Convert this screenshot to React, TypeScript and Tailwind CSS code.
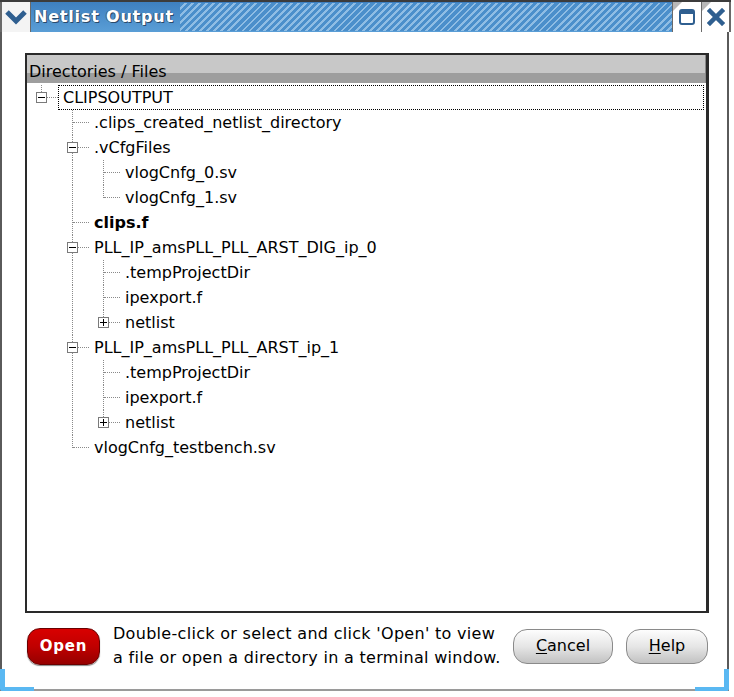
import React, { FC } from 'react'

type Row = {
  label: string
  level: number
  anc: boolean[]
  last: boolean
  expander?: 'minus' | 'plus'
  bold?: boolean
  selected?: boolean
}

const rows: Row[] = [
  { label: 'CLIPSOUTPUT', level: 0, anc: [], last: true, expander: 'minus', selected: true },
  { label: '.clips_created_netlist_directory', level: 1, anc: [false], last: false },
  { label: '.vCfgFiles', level: 1, anc: [false], last: false, expander: 'minus' },
  { label: 'vlogCnfg_0.sv', level: 2, anc: [false, true], last: false },
  { label: 'vlogCnfg_1.sv', level: 2, anc: [false, true], last: true },
  { label: 'clips.f', level: 1, anc: [false], last: false, bold: true },
  { label: 'PLL_IP_amsPLL_PLL_ARST_DIG_ip_0', level: 1, anc: [false], last: false, expander: 'minus' },
  { label: '.tempProjectDir', level: 2, anc: [false, true], last: false },
  { label: 'ipexport.f', level: 2, anc: [false, true], last: false },
  { label: 'netlist', level: 2, anc: [false, true], last: true, expander: 'plus' },
  { label: 'PLL_IP_amsPLL_PLL_ARST_ip_1', level: 1, anc: [false], last: false, expander: 'minus' },
  { label: '.tempProjectDir', level: 2, anc: [false, true], last: false },
  { label: 'ipexport.f', level: 2, anc: [false, true], last: false },
  { label: 'netlist', level: 2, anc: [false, true], last: true, expander: 'plus' },
  { label: 'vlogCnfg_testbench.sv', level: 1, anc: [false], last: true },
]

const Expander: FC<{ kind: 'minus' | 'plus' }> = ({ kind }) => (
  <div className="absolute left-[9px] top-[7px] w-[11px] h-[11px] border border-[#7a7a7a] bg-white flex items-center justify-center">
    <div className="absolute w-[7px] h-[1px] bg-black" />
    {kind === 'plus' && <div className="absolute w-[1px] h-[7px] bg-black" />}
  </div>
)

const TreeRow: FC<{ row: Row }> = ({ row }) => (
  <div className="flex h-[25px] items-stretch">
    {row.anc.map((on, i) => (
      <div key={i} className="relative w-[31px] shrink-0">
        {on && <div className="absolute left-[14px] top-0 bottom-0 border-l border-dotted border-[#8a8a8a]" />}
      </div>
    ))}
    <div className="relative w-[31px] shrink-0">
      <div className={`absolute left-[14px] top-0 border-l border-dotted border-[#8a8a8a] ${row.last ? 'h-[13px]' : 'bottom-0'}`} />
      <div className="absolute left-[15px] right-0 top-[12px] border-t border-dotted border-[#8a8a8a]" />
      {row.expander && <Expander kind={row.expander} />}
    </div>
    <div
      className={`flex items-center text-[16px] text-black ${row.bold ? 'font-bold' : ''} ${
        row.selected ? 'flex-1 border border-dotted border-black mr-[2px] pl-[4px]' : 'pl-[5px]'
      }`}
    >
      {row.label}
    </div>
  </div>
)

const App: FC = () => {
  return (
    <div className="w-[734px] h-[697px] bg-white overflow-hidden flex flex-col font-['DejaVu_Sans',sans-serif]">
      {/* title bar */}
      <div className="flex h-[32px] mr-[3px] border-t-2 border-[#3c3c3c] shrink-0">
        <div className="w-[31px] bg-[#f4f4f4] border-l-2 border-r border-[#6a6a6a] flex items-center justify-center">
          <svg width="22" height="16" viewBox="0 0 22 16">
            <path d="M2 3 L11 12 L20 3" fill="none" stroke="#2f5f90" strokeWidth="5" strokeLinejoin="miter" />
          </svg>
        </div>
        <div className="flex-1 flex bg-gradient-to-b from-[#3e80c0] to-[#5a9ed6]">
          <div className="flex items-center pl-[3px] pr-[6px]">
            <span className="text-white font-bold text-[16px] tracking-[0.8px] [text-shadow:1px_1px_0_#2a4a6a,-1px_0_0_#3a5f86]">
              Netlist Output
            </span>
          </div>
          <div className="flex-1 my-[1px] bg-[repeating-linear-gradient(135deg,#4b8fcb_0px,#4b8fcb_3px,#8fbde4_3px,#8fbde4_5px)]" />
        </div>
        <div className="relative w-[29px] bg-white border-l border-[#6a6a6a] flex items-center justify-center">
          <div className="absolute left-0 top-0 w-0 h-0 border-t-[9px] border-r-[9px] border-t-[#b8b8b8] border-r-transparent" />
          <div className="w-[16px] h-[16px] rounded-[3px] border-2 border-t-[5px] border-[#2f5f90]" />
        </div>
        <div className="relative w-[30px] bg-white border-l border-r-2 border-[#6a6a6a] flex items-center justify-center">
          <div className="absolute left-0 top-0 w-0 h-0 border-t-[9px] border-r-[9px] border-t-[#b8b8b8] border-r-transparent" />
          <svg width="18" height="18" viewBox="0 0 18 18">
            <path d="M3 3 L15 15 M15 3 L3 15" stroke="#2f5f90" strokeWidth="4.5" strokeLinecap="square" />
          </svg>
        </div>
      </div>

      {/* body */}
      <div className="relative flex-1 flex flex-col border-l-2 border-r-2 border-[#5a5a5a] mr-[5px] mb-[6px] border-b-2 border-b-[#9a9a9a]">
        <div className="ml-[23px] mt-[21px] w-[684px] h-[560px] border-2 border-[#2a2a2a] border-r-[3px] flex flex-col">
          <div className="h-[28px] flex flex-col border-r border-[#8a8a8a] shrink-0">
            <div className="h-[18px] bg-[#c8c8c8]" />
            <div className="h-[10px] bg-[#9e9e9e]" />
            <div className="-mt-[28px] h-[28px] flex items-end pl-[2px] pb-[1px] text-[16px] text-black leading-[20px]">
              Directories / Files
            </div>
          </div>
          <div className="pt-[2px]">
            {rows.map((r, i) => (
              <TreeRow key={i} row={r} />
            ))}
          </div>
        </div>

        <div className="flex items-center ml-[25px] mt-[9px]">
          <button className="w-[73px] h-[37px] rounded-[13px] border border-[#6a0000] bg-gradient-to-b from-[#d80000] via-[#c00000] to-[#960000] text-white font-bold text-[15px] tracking-[0.8px] shadow-[0_1px_1px_#888]">
            Open
          </button>
          <div className="ml-[13px] text-[16px] tracking-[0.3px] leading-[24px] text-black">
            <div>Double-click or select and click 'Open' to view</div>
            <div>a file or open a directory in a terminal window.</div>
          </div>
          <button className="ml-auto w-[100px] h-[35px] rounded-[14px] border border-[#8a8a8a] bg-gradient-to-b from-[#fdfdfd] via-[#e6e6e6] to-[#c2c2c2] text-[16px] text-black">
            <span className="underline decoration-1 underline-offset-2">C</span>ancel
          </button>
          <button className="ml-[13px] mr-[19px] w-[82px] h-[35px] rounded-[14px] border border-[#8a8a8a] bg-gradient-to-b from-[#fdfdfd] via-[#e6e6e6] to-[#c2c2c2] text-[16px] text-black">
            <span className="underline decoration-1 underline-offset-2">H</span>elp
          </button>
        </div>

        <div className="absolute -left-[2px] -bottom-[2px] w-[34px] h-[22px] border-l-[5px] border-b-[4px] border-[#5ab8f2] rounded-bl-[3px]" />
        <div className="absolute -right-[2px] -bottom-[2px] w-[34px] h-[22px] border-r-[5px] border-b-[4px] border-[#5ab8f2] rounded-br-[3px]" />
      </div>
    </div>
  )
}

export default App
